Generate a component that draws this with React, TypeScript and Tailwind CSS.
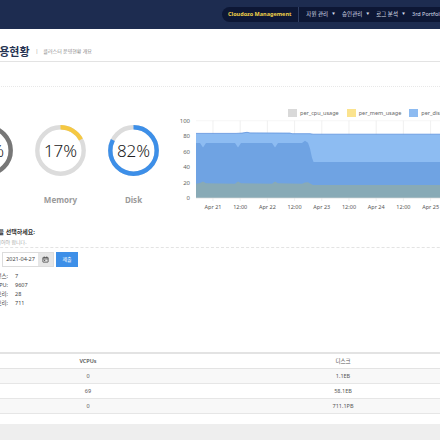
const font = "font-['Noto_Sans','Noto_Sans_CJK_KR',sans-serif]"

const menus = ["자원 관리", "승인관리", "로그 분석", "3rd Portfolio"]

const stats = [
  { label: "인스턴스:", value: "7" },
  { label: "vCPU:", value: "9607" },
  { label: "할당 메모리:", value: "28" },
  { label: "사용 메모리:", value: "711" },
]

const rows = [
  { name: "cluster-01", vcpu: "0", disk: "1.1EB" },
  { name: "cluster-02", vcpu: "69", disk: "58.1EB" },
  { name: "cluster-03", vcpu: "0", disk: "711.1PB" },
]

// chart data in screen px (x) and percent (v)
const top: [number, number][] = [
  [196, 83.6], [236, 83.6], [242, 84], [247, 85], [250, 84.2], [290, 84], [292, 83.2],
  [310, 83.2], [313, 82.6], [520, 82.6],
]
const mid: [number, number][] = [
  [196, 71], [200, 71], [203, 65.5], [206, 71], [235, 71], [238, 65.5], [241, 71],
  [272, 71], [275, 65.5], [278, 71], [302, 71], [305, 74], [308, 71.5], [310, 64],
  [312, 52], [313.5, 46.5], [520, 46.5],
]
const low: [number, number][] = [
  [196, 18.5], [200, 19.5], [203, 21.5], [206, 19], [235, 18.5], [238, 21.5], [241, 19],
  [272, 18.5], [275, 21.5], [278, 19], [302, 18.5], [305, 20], [308, 20.5], [311, 18],
  [313, 17], [520, 17],
]

const X = (sx: number) => sx - 176
const Y = (v: number) => 81 - v * 0.773

function area(pts: [number, number][]) {
  const line = pts.map(([x, v], i) => `${i ? "L" : "M"}${X(x)},${Y(v).toFixed(1)}`).join(" ")
  return `${line} L${X(pts[pts.length - 1][0])},${Y(0)} L${X(pts[0][0])},${Y(0)} Z`
}
function edge(pts: [number, number][]) {
  return pts.map(([x, v], i) => `${i ? "L" : "M"}${X(x)},${Y(v).toFixed(1)}`).join(" ")
}

const xLabels = ["Apr 21", "12:00", "Apr 22", "12:00", "Apr 23", "12:00", "Apr 24", "12:00", "Apr 25", "12:00"]

function Gauge({ pct, color, label }: { pct: number; color: string; label: string }) {
  const r = 23.2
  const c = 2 * Math.PI * r
  return (
    <div className="flex w-[51px] flex-col items-center">
      <div className="relative h-[51px] w-[51px]">
        <svg viewBox="0 0 51 51" className="h-[51px] w-[51px] -rotate-90">
          <circle cx="25.5" cy="25.5" r={r} fill="none" stroke="#dcdcdc" strokeWidth="4.4" />
          <circle
            cx="25.5"
            cy="25.5"
            r={r}
            fill="none"
            stroke={color}
            strokeWidth="4.4"
            strokeDasharray={`${(c * pct) / 100} ${c}`}
          />
        </svg>
        <span className="absolute inset-0 flex items-center justify-center text-[17px] font-light text-[#222]">
          {pct}%
        </span>
      </div>
      <span className="mt-[20px] text-[8px] leading-[8px] font-bold text-[#9a9a9a]">{label}</span>
    </div>
  )
}

export default function App() {
  return (
    <div className={`h-[440px] w-full overflow-hidden bg-white ${font}`}>
      <div className="-ml-[60px] w-[570px]">
        {/* top nav */}
        <div className="flex h-[29px] items-center bg-[#1d2c50] pl-[282px]">
          <div className="flex h-[15px] flex-1 items-center rounded-l-full bg-[#0d1735] pl-[6px]">
            <span className="text-[5.5px] font-bold whitespace-nowrap text-[#f0d24a]">Cloudozo Management</span>
            <span className="ml-[7px] h-full w-px bg-[#2e3d62]" />
            <div className="ml-[7px] flex gap-[7px]">
              {menus.map((m) => (
                <span key={m} className="flex items-center text-[5.5px] whitespace-nowrap text-[#d9dee9]">
                  {m}
                  <span className="ml-[4px] text-[3px]">▼</span>
                </span>
              ))}
            </div>
          </div>
        </div>

        {/* page title */}
        <div className="flex h-[33px] items-center border-b border-[#e3e3e3] pt-[14px] pl-[26px]">
          <h1 className="text-[11px] font-bold text-[#263352]">자원 사용현황</h1>
          <span className="ml-[6px] text-[5px] text-[#999]">|</span>
          <span className="ml-[5px] text-[5px] text-[#888]">클러스터 운영현황 개요</span>
        </div>

        {/* gauges + chart */}
        <div className="mt-[24px] flex items-start border-t border-dotted border-[#e8e8e8] pt-[22px]">
          <div className="mt-[16px] flex gap-[22px] pl-[22px]">
            <Gauge pct={71} color="#777777" label="CPU" />
            <Gauge pct={17} color="#f5c842" label="Memory" />
            <Gauge pct={82} color="#3d8fe8" label="Disk" />
          </div>
          <div className="ml-[17px] flex-1">
            <div className="flex h-[8px] items-center gap-[8px] pl-[112px] text-[5.5px] text-[#666]">
              <span className="flex items-center gap-[3px]">
                <span className="h-[8px] w-[9px] bg-[#d9d9d9]" />per_cpu_usage
              </span>
              <span className="flex items-center gap-[3px]">
                <span className="h-[8px] w-[9px] bg-[#fbe38e]" />per_mem_usage
              </span>
              <span className="flex items-center gap-[3px]">
                <span className="h-[8px] w-[9px] bg-[#8dbbf1]" />per_disk_usage
              </span>
            </div>
            <svg width="334" height="96" className="block">
              {[0, 20, 40, 60, 80, 100].map((v) => (
                <g key={v}>
                  <line x1="20" x2="334" y1={Y(v)} y2={Y(v)} stroke="#f0f0f0" strokeWidth="0.6" />
                  <text x="14" y={Y(v) + 2} textAnchor="end" fontSize="6" fill="#666">
                    {v}
                  </text>
                </g>
              ))}
              {xLabels.map((l, i) => (
                <g key={i}>
                  <line x1={37 + 27.2 * i} x2={37 + 27.2 * i} y1={Y(100)} y2={Y(0) + 3} stroke="#e6e6e6" strokeWidth="0.6" />
                  <text x={37 + 27.2 * i} y="92" textAnchor="middle" fontSize="5.5" fill="#555">
                    {l}
                  </text>
                </g>
              ))}
              <path d={area(top)} fill="#8dbcf2" />
              <path d={edge(top)} fill="none" stroke="#5d92dd" strokeWidth="0.8" />
              <path d={area(mid)} fill="#6fa3e3" />
              <path d={area(low)} fill="#88aab6" />
              <line x1="20" x2="334" y1={Y(0)} y2={Y(0)} stroke="#ddd" strokeWidth="0.6" />
            </svg>
          </div>
        </div>

        {/* date select */}
        <div className="mt-[15px] pl-[42px]">
          <p className="text-[6px] leading-[8px] font-bold text-[#333]">기준일을 선택하세요:</p>
          <p className="mt-[3px] -ml-[10px] text-[5px] leading-[6px] text-[#aaa]">날짜가 선택되어야 합니다.</p>
        </div>
        <div className="mt-[2px] border-t border-dashed border-[#e3e3e3]" />
        <div className="mt-[4px] flex h-[15px] gap-[2px] pl-[62px]">
          <div className="flex border border-[#dcdcdc]">
            <span className="flex w-[35px] items-center justify-center text-[5.5px] text-[#444]">2021-04-27</span>
            <span className="flex w-[15px] items-center justify-center bg-[#e6e6e6]">
              <svg width="7" height="7" viewBox="0 0 24 24" fill="none" stroke="#555" strokeWidth="3">
                <rect x="3" y="5" width="18" height="16" rx="1" />
                <path d="M3 10h18M8 2v5M16 2v5" />
                <rect x="7" y="13" width="4" height="4" fill="#555" stroke="none" />
              </svg>
            </span>
          </div>
          <button className="w-[22px] bg-[#3d8fe8] text-[5px] text-white">제출</button>
        </div>
        <div className="mt-[5px] grid grid-cols-[68px_1fr] gap-x-[7px] text-[5.5px] leading-[9px] text-[#444]">
          {stats.map((s) => (
            <div key={s.label} className="contents">
              <span className="text-right">{s.label}</span>
              <span>{s.value}</span>
            </div>
          ))}
        </div>

        {/* table */}
        <div className="mt-[44px] border-t-2 border-[#e3e3e3] text-[5.5px] text-[#555]">
          <div className="grid h-[15px] grid-cols-[60px_176px_1fr] items-center border-b border-[#e3e3e3] text-center">
            <span>클러스터</span>
            <span className="font-semibold">VCPUs</span>
            <span>디스크</span>
          </div>
          {rows.map((r, i) => (
            <div
              key={r.name}
              className={`grid h-[15px] grid-cols-[60px_176px_1fr] items-center border-b border-[#e6e6e6] text-center ${
                i % 2 === 0 ? "bg-[#f8f8f8]" : "bg-white"
              }`}
            >
              <span>{r.name}</span>
              <span>{r.vcpu}</span>
              <span>{r.disk}</span>
            </div>
          ))}
        </div>
        <div className="mt-[10px] h-[40px] bg-[#eeeeee]" />
      </div>
    </div>
  )
}
